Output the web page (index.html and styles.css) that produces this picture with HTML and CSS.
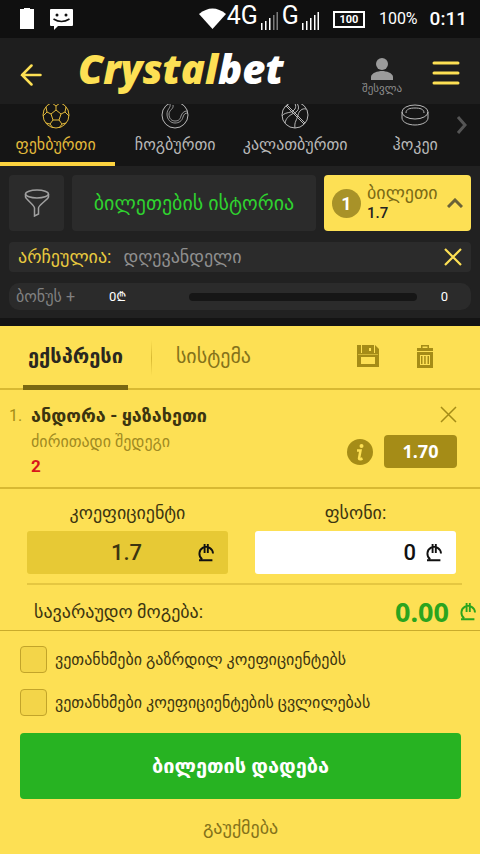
FILE: index.html
```html
<!DOCTYPE html>
<html lang="ka">
<head>
<meta charset="utf-8">
<meta name="viewport" content="width=device-width, initial-scale=1">
<title>Crystalbet</title>
<link rel="stylesheet" href="styles.css">
</head>
<body>
<svg class="defs" aria-hidden="true">
  <symbol id="lari" viewBox="0 0 16 19">
    <path d="M4.2 16.2A6.8 6.8 0 1 1 15 10.5M6.6 1v9M9.8 1v9M1 17.3h13.4" fill="none" stroke="currentColor" stroke-width="1.9"/>
  </symbol>
</svg>

<div class="status">
  <svg class="status-left" width="54" height="24" viewBox="0 0 54 24" fill="#fff" aria-hidden="true">
    <path d="M4 1h6v1h4v20H0V2h4z"/>
    <path d="M31 2h21a1 1 0 0 1 1 1v15a1 1 0 0 1-1 1H38l-4 4v-4h-3a1 1 0 0 1-1-1V3a1 1 0 0 1 1-1z"/>
    <circle cx="37" cy="8" r="1.5" fill="#101010"/><circle cx="46" cy="8" r="1.5" fill="#101010"/>
    <path d="M33.500 12q8 5 16 0" fill="none" stroke="#101010" stroke-width="1.500"/>
  </svg>
  <div class="status-net">
    <svg class="wifi" width="27" height="22" viewBox="0 0 27 22" fill="#fff" aria-hidden="true"><path d="M0 6Q13.500-5 27 6L13.500 21z"/></svg>
    <span class="net">4G</span>
    <svg class="bars" width="18" height="18" viewBox="0 0 18 18" aria-hidden="true"><g fill="#fff"><path d="M0 11h1.500v7H0zM4 9h1.500v9H4zM8 6h1.500v12H8z"/><path opacity=".45" d="M12 3h1.500v15H12zM15.500 0H17v18h-1.500z"/></g></svg>
    <span class="net">G</span>
    <svg class="bars" width="18" height="18" viewBox="0 0 18 18" aria-hidden="true"><path fill="#fff" d="M0 11h1.500v7H0zM4 9h1.500v9H4zM8 6h1.500v12H8zM12 3h1.500v15H12zM15.500 0H17v18h-1.500z"/></svg>
  </div>
  <span class="battery">100</span>
  <span class="percent">100%</span>
  <span class="clock">0:11</span>
</div>

<header class="header">
  <a class="back" href="#" aria-label="უკან"><svg width="22" height="22" viewBox="0 0 22 22" fill="none" stroke="#fde054" stroke-width="2.500" stroke-linecap="round"><path d="M20.500 11H2M11.500 1.500 2 11l9.500 9.500"/></svg></a>
  <a class="logo" href="#">Crystal<span>bet</span></a>
  <a class="login" href="#">
    <svg width="24" height="24" viewBox="0 0 24 24" fill="#9b9b9b" aria-hidden="true"><circle cx="12" cy="7" r="6"/><path d="M1 23v-3c0-4 7-6 11-6s11 2 11 6v3z"/></svg>
    <span>შესვლა</span>
  </a>
  <button class="menu" aria-label="მენიუ"><svg width="28" height="24" viewBox="0 0 28 24" stroke="#fde054" stroke-width="3" stroke-linecap="round"><path d="M2 2h24M2 12h24M2 22h24"/></svg></button>
</header>

<nav class="sports">
  <a class="sport active" href="#">
    <svg width="28" height="28" viewBox="0 0 28 28" aria-hidden="true"><circle cx="14" cy="14" r="13"/><path d="m14 9 5 4-2 6h-6l-2-6zM14 9V5l-4-3M14 5l4-3M19 13l4-2 1-5M23 11l4 4M17 19l3 4 4-1M20 23l-3 4M11 19l-3 4-4-1M8 23l3 4M9 13l-4-2-1-5M5 11l-4 4"/></svg>
    <span>ფეხბურთი</span>
  </a>
  <a class="sport" href="#">
    <svg width="28" height="28" viewBox="0 0 28 28" aria-hidden="true"><circle cx="14" cy="14" r="13"/><path d="M9 3c1 4-3 5-3 10 0 6 4 9 8 9s7-2 8-6c1-3 2-4 5-4M12 4c1 4-4 5-4 9 0 5 3 7 6 7s5-1 6-5c1-3 3-5 6-5" stroke-width=".8"/></svg>
    <span>ჩოგბურთი</span>
  </a>
  <a class="sport" href="#">
    <svg width="28" height="28" viewBox="0 0 28 28" aria-hidden="true"><circle cx="14" cy="14" r="13"/><path d="m5 5 18 18M6 4l18 18M13 1c3 4 2 8-3 10-4 1-7 1-9 4M15 1c5 6 2 10-4 12-3 2-6 4-7 9M25 8c-4-1-7 2-8 6-1 5-4 7-3 13"/></svg>
    <span>კალათბურთი</span>
  </a>
  <a class="sport" href="#">
    <svg width="28" height="28" viewBox="0 0 28 28" aria-hidden="true"><ellipse cx="14" cy="11" rx="13" ry="7"/><path d="M1 11v6c0 4 6 7 13 7s13-3 13-7v-6M5 12c0-4 4-5 9-5s9 1 9 5"/></svg>
    <span>ჰოკეი</span>
  </a>
  <svg class="sports-next" width="12" height="18" viewBox="0 0 12 18" fill="none" stroke="#555" stroke-width="3" aria-hidden="true"><path d="m2 1 7 8-7 8"/></svg>
</nav>

<section class="tools">
  <div class="tool-row">
    <button class="filter" aria-label="ფილტრი"><svg width="26" height="28" viewBox="0 0 26 28" fill="none" stroke="#a0a0a0" stroke-width="1.500"><ellipse cx="13" cy="5" rx="11.500" ry="4"/><path d="M1.500 5v3c1 3 9 8 9 11v8l4-2v-6c0-3 9-8 10-11V5"/></svg></button>
    <a class="history" href="#">ბილეთების ისტორია</a>
    <button class="ticket">
      <span class="count">1</span>
      <span class="ticket-text"><span>ბილეთი</span><b>1.7</b></span>
      <svg width="16" height="10" viewBox="0 0 16 10" fill="none" stroke="#6b6337" stroke-width="3" aria-hidden="true"><path d="m1 9 7-7 7 7"/></svg>
    </button>
  </div>
  <div class="chosen">
    <b>არჩეულია:</b><span>დღევანდელი</span>
    <button class="clear" aria-label="წაშლა"><svg width="18" height="18" viewBox="0 0 18 18" stroke="#fde054" stroke-width="2.200"><path d="m1 1 16 16M17 1 1 17"/></svg></button>
  </div>
  <div class="bonus">
    <span class="bonus-name">ბონუს +</span><span class="bonus-sum">0₾</span><span class="track"></span><span class="bonus-num">0</span>
  </div>
</section>

<main class="slip">
  <div class="tabs">
    <button class="tab active">ექსპრესი</button>
    <button class="tab">სისტემა</button>
    <button class="tab-icon" aria-label="შენახვა"><svg width="22" height="22" viewBox="0 0 22 22"><path fill="#a58c17" d="M0 0h18l4 4v18H0z"/><path fill="#fde054" d="M4 0h1v8H4zM17 0h1v8h-1zM4 12h14v7H4zM1 9.500h20v.6H1zM12 3h2v3h-2z"/></svg></button>
    <button class="tab-icon" aria-label="წაშლა"><svg width="16" height="23" viewBox="0 0 16 23"><path fill="#a58c17" d="M4 0h8v3h4v3H0V3h4zM0 7h16v16H0z"/><path fill="#fde054" d="M5.500 1.500h5V3h-5zM3 10h10v10H3z"/><path fill="#a58c17" d="M4 11h1.500v8H4zM7.200 11h1.500v8H7.200zM10.500 11H12v8h-1.500z"/></svg></button>
  </div>

  <article class="event">
    <span class="num">1.</span>
    <div class="event-text">
      <h2>ანდორა - ყაზახეთი</h2>
      <p>ძირითადი შედეგი</p>
      <strong>2</strong>
    </div>
    <div class="event-side">
      <button class="remove" aria-label="წაშლა"><svg width="17" height="17" viewBox="0 0 17 17" stroke="#a58c17" stroke-width="1.500"><path d="m1 1 15 15M16 1 1 16"/></svg></button>
      <div class="odds-row">
        <svg width="26" height="26" viewBox="0 0 26 26" aria-hidden="true"><circle cx="13" cy="13" r="13" fill="#a58c17"/><circle cx="14.500" cy="7" r="2" fill="#fde054"/><path d="M10 11.500h3.500l-1.500 8q0 1.500 3.500 0" fill="none" stroke="#fde054" stroke-width="2.500"/></svg>
        <span class="odds">1.70</span>
      </div>
    </div>
  </article>

  <form class="bet">
    <div class="fields">
      <div class="field">
        <label for="odd">კოეფიციენტი</label>
        <div class="box shaded"><input id="odd" value="1.7" readonly><svg class="lari"><use href="#lari"/></svg></div>
      </div>
      <div class="field">
        <label for="stake">ფსონი:</label>
        <div class="box"><input id="stake" value="0"><svg class="lari"><use href="#lari"/></svg></div>
      </div>
    </div>
    <div class="win"><span>სავარაუდო მოგება:</span><b>0.00</b><svg class="lari"><use href="#lari"/></svg></div>
    <div class="agree">
      <label class="check"><input type="checkbox"><span>ვეთანხმები გაზრდილ კოეფიციენტებს</span></label>
      <label class="check"><input type="checkbox"><span>ვეთანხმები კოეფიციენტების ცვლილებას</span></label>
      <button class="place" type="button">ბილეთის დადება</button>
      <button class="cancel" type="button">გაუქმება</button>
    </div>
  </form>
</main>
</body>
</html>
```

FILE: styles.css
```css
* { box-sizing: border-box; }
body {
  margin: 0;
  min-height: 100vh;
  background: #fde054;
  font-family: Roboto, "Noto Sans", "DejaVu Sans", sans-serif;
  font-size: 16px;
  line-height: 20px;
}
button, input { font: inherit; color: inherit; border: 0; padding: 0; background: none; }
a { color: inherit; text-decoration: none; }
svg { display: block; flex: none; }
.defs { position: absolute; width: 0; height: 0; }

.status { display: flex; align-items: center; height: 38px; padding: 0 13px 0 20px; background: #101010; color: #fff; }
.status-left { margin-right: auto; }
.status-net { display: flex; align-items: flex-end; height: 22px; margin-right: 13px; gap: 3px; }
.wifi { align-self: flex-start; margin-right: -2px; }
.net { font-size: 25px; line-height: 28px; }
.battery { width: 32px; border: 2px solid #fff; font-size: 11px; line-height: 13px; font-weight: 700; text-align: center; }
.percent { margin-left: 14px; }
.clock { margin-left: 12px; font-size: 19px; font-weight: 500; }

.header { display: flex; align-items: center; height: 66px; padding: 0 20px; background: #1e1e1e; }
.back { margin-top: 8px; }
.logo { margin-left: 36px; margin-right: auto; font: italic 800 40px/44px "Open Sans", sans-serif; color: #fde054; padding-bottom: 4px; }
.logo span { color: #fff; }
.login { display: flex; flex-direction: column; align-items: center; margin-top: 12px; color: #8d8d8d; font-size: 11px; line-height: 16px; }
.menu { margin-left: 30px; margin-top: 4px; }

.sports { position: relative; display: flex; height: 62px; overflow: hidden; background: #151515; }
.sport { flex: 0 0 25%; display: flex; flex-direction: column; align-items: center; justify-content: flex-end; padding-bottom: 1px; color: #b8b8b8; font-size: 16px; line-height: 32px; border-bottom: 4px solid transparent; }
.sport svg { fill: none; stroke: currentColor; }
.sport.active { flex-basis: 24%; padding-right: 4px; color: #e2b93b; border-color: #fdd33f; }
.sports-next { position: absolute; right: 12px; top: 12px; }

.tools { display: grid; gap: 11px; padding: 9px 9px 8px; background: #212121; border-bottom: 8px solid #141414; }
.tool-row { display: flex; gap: 8px; height: 56px; }
.filter { width: 55px; display: grid; place-items: center; background: #2b2b2b; border-radius: 4px; }
.history { flex: 1; display: grid; place-items: center; background: #2b2b2b; border-radius: 4px; color: #2fd12f; font-size: 20px; }
.ticket { width: 147px; display: flex; align-items: center; padding: 0 8px; background: #fde054; border-radius: 4px; }
.count { width: 29px; height: 29px; border-radius: 50%; background: #a89228; color: #fff; font-weight: 700; font-size: 18px; line-height: 29px; }
.ticket-text { flex: 1; padding-left: 6px; text-align: left; color: #7b6a15; font-size: 18px; }
.ticket-text > * { display: block; }
.ticket-text b { color: #222; font-size: 15px; font-weight: 500; }
.chosen { display: flex; align-items: center; height: 30px; padding: 0 9px; background: #2b2b2b; border-radius: 4px; color: #8f8f8f; font-size: 18px; }
.chosen b { font-weight: 400; margin-right: 12px; color: #e8c93f; }
.clear { margin-left: auto; }
.bonus { display: flex; align-items: center; height: 27px; padding: 0 7px; background: #2b2b2b; border-radius: 10px; color: #fff; font-size: 13px; }
.bonus-name { width: 93px; color: #808080; font-size: 16px; }
.bonus-sum { width: 80px; }
.track { flex: 1; height: 8px; border-radius: 4px; background: #161616; }
.bonus-num { width: 47px; padding-left: 8px; text-align: center; }

.slip { color: #3c3510; }
.tabs { display: flex; align-items: stretch; height: 64px; padding: 0 47px 0 23px; border-bottom: 2px solid #d8b932; }
.tab { margin-bottom: -2px; padding: 0 25px 4px; font-size: 20px; color: #84721a; }
.tab.active { padding: 1px 5px 0; margin-right: 23px; font-weight: 700; color: #2a2820; border-bottom: 5px solid #7a6812; }
.tab:nth-child(2) { background: linear-gradient(#fde054, #d8b932, #fde054) left / 1px 36px no-repeat; }
.tab-icon { margin-left: 38px; padding-bottom: 2px; }
.tab-icon:nth-child(3) { margin-left: auto; }

.event { display: flex; min-height: 98px; padding: 14px 23px 10px 9px; border-bottom: 2px solid #d8b932; }
.num { width: 22px; color: #a58c17; line-height: 24px; }
.event-text { flex: 1; }
h2 { margin: 0; font-size: 18px; line-height: 24px; font-weight: 700; }
.event p { margin: 2px 0; color: #a08a22; font-size: 16px; line-height: 24px; }
.event strong { color: #d8161c; font-size: 17px; }
.event-side { display: flex; flex-direction: column; align-items: flex-end; gap: 12px; padding-top: 2px; }
.odds-row { display: flex; align-items: center; gap: 11px; }
.odds { width: 73px; border-radius: 4px; background: #a58c17; color: #fff; font: 700 18px/33px "Noto Sans", sans-serif; text-align: center; }

.fields { display: grid; grid-template-columns: 1fr 1fr; gap: 27px; margin: 0 18px 0 27px; padding: 11px 6px 9px 0; border-bottom: 2px solid #e5c741; }
.field { display: grid; gap: 5px; text-align: center; }
.field label { font-size: 18px; line-height: 26px; }
.box { display: flex; align-items: center; height: 43px; padding: 0 14px; border-radius: 3px; background: #fff; color: #111; }
.box input { flex: 1; width: 0; min-width: 0; padding-right: 10px; text-align: right; font-size: 22px; font-weight: 500; }
.box.shaded { background: #e7c935; }
.shaded input { padding: 0 0 0 14px; text-align: center; color: #3c3510; }
.lari { width: 16px; height: 19px; }
.win { display: flex; align-items: center; height: 46px; padding: 8px 4px 0 34px; border-bottom: 1px solid #c9ab2c; font-size: 18px; }
.win b { margin-left: auto; margin-right: 11px; color: #2ba41e; font: 700 27px/32px "Noto Sans", sans-serif; }
.win .lari { color: #2ba41e; }
.agree { display: grid; padding: 15px 19px 12px 20px; }
.check { display: flex; align-items: center; gap: 8px; height: 27px; margin-bottom: 16px; font-size: 16px; }
.check input { appearance: none; flex: none; width: 27px; height: 27px; margin: 0; border: 1px solid #c2a42a; border-radius: 4px; background: #f3d549; }
.place { height: 66px; margin-top: 1px; border-radius: 4px; background: #27b322; color: #fff; font-size: 20px; font-weight: 700; }
.cancel { margin-top: 17px; color: #84721a; font-size: 18px; line-height: 24px; }
```
